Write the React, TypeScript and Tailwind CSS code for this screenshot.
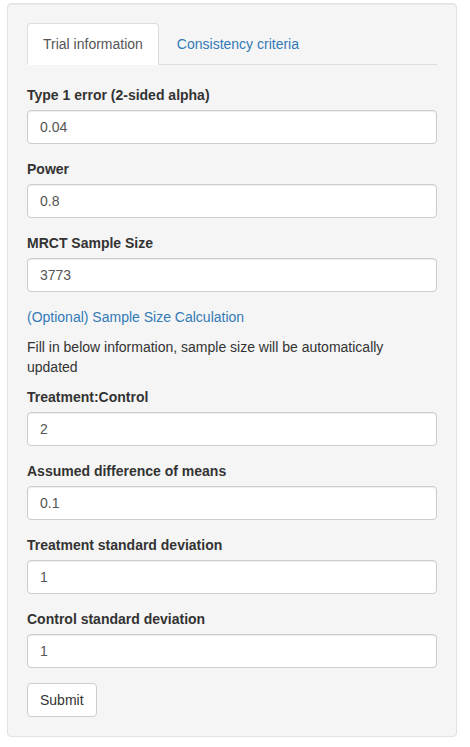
import React, { useState } from 'react';

const fields1 = [
  { label: 'Type 1 error (2-sided alpha)', value: '0.04' },
  { label: 'Power', value: '0.8' },
  { label: 'MRCT Sample Size', value: '3773' },
];

const fields2 = [
  { label: 'Treatment:Control', value: '2' },
  { label: 'Assumed difference of means', value: '0.1' },
  { label: 'Treatment standard deviation', value: '1' },
  { label: 'Control standard deviation', value: '1' },
];

const NumField: React.FC<{ label: string; value: string }> = ({ label, value }) => {
  const [val, setVal] = useState(value);
  return (
    <div className="mb-[15px]">
      <label className="inline-block mb-[5px] font-bold leading-5 text-[#333]">{label}</label>
      <input
        value={val}
        onChange={(e) => setVal(e.target.value)}
        className="block w-full h-[34px] px-3 py-[6px] text-[14px] leading-5 text-[#555] bg-white border border-[#ccc] rounded-[4px] shadow-[inset_0_1px_1px_rgba(0,0,0,0.075)] outline-none"
      />
    </div>
  );
};

export default function App() {
  const [tab, setTab] = useState(0);

  return (
    <div
      className="min-h-screen bg-white pl-[7px] pt-[3px] text-[14px] leading-5 text-[#333]"
      style={{ fontFamily: '"Liberation Sans", Arial, sans-serif' }}
    >
      <div className="w-[450px] bg-[#f5f5f5] border border-[#e3e3e3] rounded-[4px] p-[19px] shadow-[inset_0_1px_1px_rgba(0,0,0,0.05)]">
        {/* Tabs */}
        <ul className="flex border-b border-[#ddd]">
          {['Trial information', 'Consistency criteria'].map((t, i) => (
            <li key={t} className="-mb-px mr-[2px]">
              <button
                onClick={() => setTab(i)}
                className={`block px-[15px] py-[10px] leading-5 border rounded-t-[4px] ${
                  tab === i
                    ? 'bg-white text-[#555] border-[#ddd] border-b-transparent'
                    : 'text-[#337ab7] border-transparent'
                }`}
              >
                {t}
              </button>
            </li>
          ))}
        </ul>

        {/* Content */}
        <div className="mt-5">
          {fields1.map((f) => (
            <NumField key={f.label} label={f.label} value={f.value} />
          ))}

          <div className="leading-5 text-[#337ab7]">(Optional) Sample Size Calculation</div>
          <p className="mt-[10px] mb-[10px] leading-5">
            Fill in below information, sample size will be automatically updated
          </p>

          {fields2.map((f) => (
            <NumField key={f.label} label={f.label} value={f.value} />
          ))}

          <button className="h-[34px] px-3 py-[6px] leading-5 text-[#333] bg-white border border-[#ccc] rounded-[4px]">
            Submit
          </button>
        </div>
      </div>
    </div>
  );
}
